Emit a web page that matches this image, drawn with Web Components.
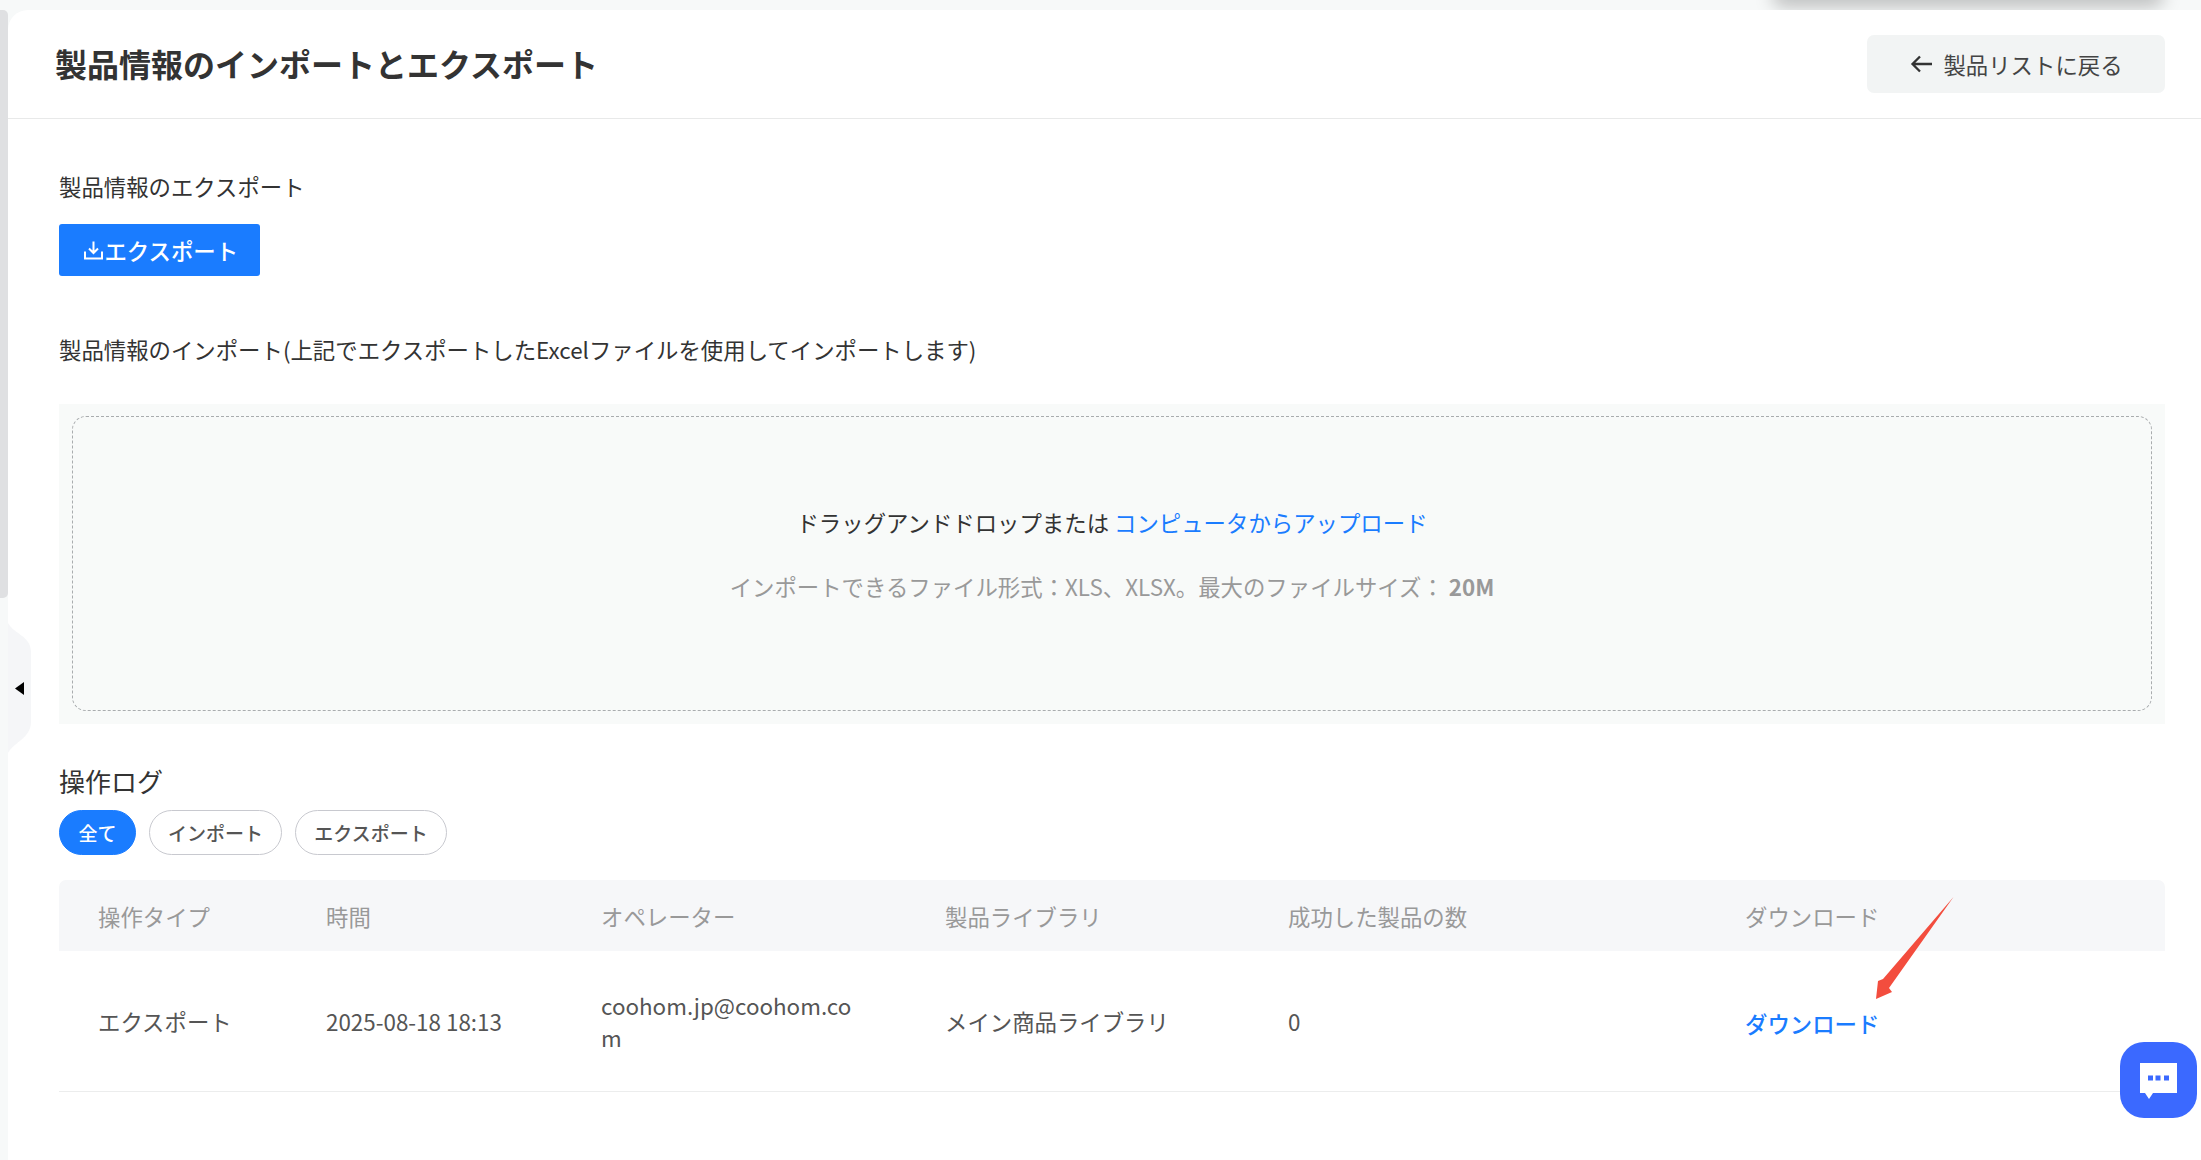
<!DOCTYPE html>
<html lang="ja"><head><meta charset="utf-8"><title>製品情報のインポートとエクスポート</title>
<style>
html,body{margin:0;padding:0;height:1160px;overflow:hidden;background:#f7f9f9;font-family:"Noto Sans CJK JP","Noto Sans",sans-serif;color:#333}
</style></head><body>
<app-shell>
  <page-header title-text="製品情報のインポートとエクスポート" back-text="製品リストに戻る"></page-header>
  <page-content>
    <section-label>製品情報のエクスポート</section-label>
    <export-button>エクスポート</export-button>
    <section-label style="margin-top:57px">製品情報のインポート(上記でエクスポートしたExcelファイルを使用してインポートします)</section-label>
    <drop-zone></drop-zone>
    <log-panel></log-panel>
  </page-content>
</app-shell>
<top-shadow></top-shadow>
<red-arrow></red-arrow>
<chat-fab></chat-fab>
<script>
function def(name, html){
  customElements.define(name, class extends HTMLElement{
    connectedCallback(){
      if(this.shadowRoot) return;
      const r=this.attachShadow({mode:"open"});
      r.innerHTML=typeof html==="function"?html(this):html;
    }
  });
}
def("app-shell",`<style>
:host{display:flex;height:1160px;padding-top:10px;box-sizing:border-box;position:relative;z-index:1}
.rail{width:8px;flex:none}
.thumb{height:588px;background:#dfe0e2;border-radius:0 5px 5px 0}
.card{flex:1;min-width:0;background:#fff;border-top-left-radius:20px;position:relative}
.tab{position:absolute;left:8px;top:622px;width:23px;height:132px}
.tab svg{display:block}
</style>
<div class="rail"><div class="thumb"></div></div>
<div class="card"><slot></slot></div>
<div class="tab"><svg width="23" height="132" viewBox="0 0 23 132"><path d="M0 1C6 12 23 14 23 30V100C23 116 6 120 0 131Z" fill="#f5f6f8"/><path d="M7 66.500L16 60V73Z" fill="#000"/></svg></div>`);
def("page-header",h=>`<style>
:host{display:flex;align-items:center;justify-content:space-between;height:108px;border-bottom:1px solid #e8e9e9;padding:0 36px 0 47px;}
h1{margin:0;font-size:32px;font-weight:700;line-height:44px;color:#333;position:relative;top:-1px}
button{all:unset;box-sizing:border-box;display:flex;align-items:center;justify-content:center;gap:10px;width:298px;height:58px;background:#f2f4f4;border-radius:7px;font-size:22.4px;color:#444;font-family:inherit}
svg{display:block}
</style><h1>${h.getAttribute("title-text")}</h1>
<button><svg width="24" height="20" viewBox="0 0 24 20" fill="none" stroke="#333" stroke-width="2.3"><path d="M23 10H3.500M11 2.500L3.500 10L11 17.500"/></svg><span>${h.getAttribute("back-text")}</span></button>`);
def("page-content",`<style>:host{display:block;padding:51px 36px 0 51px}</style><slot></slot>`);
def("section-label",`<style>:host{display:block;font-size:22.4px;line-height:32px;color:#333}</style><slot></slot>`);
def("export-button",`<style>
:host{display:flex;align-items:center;justify-content:center;width:201px;height:52px;margin-top:22px;background:#1a7cff;border-radius:3px;color:#fff;font-size:22.4px;font-weight:500}
svg{display:block;margin:0 1px 0 3.500px}
</style><svg width="19" height="19" viewBox="0 0 19 19" fill="none" stroke="#fff" stroke-width="2"><path d="M9.500 0.500V11.500M5 7.500L9.500 12L14 7.500M1 10.500V17.500H18V10.500"/></svg><slot></slot>`);
def("drop-zone",`<style>
:host{display:block;margin-top:39px;height:320px;box-sizing:border-box;background:#f8faf9;padding:12px 13px 13px}
.in{height:295px;box-sizing:border-box;border:1px dashed #a9acae;border-radius:14px;padding-top:89px;text-align:center;font-size:22.4px;line-height:32px}
.a{color:#333}.a span{color:#1a7cff}
.b{color:#999;margin-top:32px}.b b{font-weight:700}
</style><div class="in"><div class="a">ドラッグアンドドロップまたは <span>コンピュータからアップロード</span></div><div class="b">インポートできるファイル形式：XLS、XLSX。最大のファイルサイズ： <b>20M</b></div></div>`);
def("filter-tag",`<style>
:host{display:flex;align-items:center;justify-content:center;box-sizing:border-box;height:45px;border-radius:23px;font-size:19px;white-space:nowrap;border:1px solid #c8c9cf;color:#555;font-weight:500}
:host([active]){background:#1a7cff;border-color:#1a7cff;color:#fff}
</style><slot></slot>`);
def("log-panel",`<style>
:host{display:block}
h2{margin:39px 0 0;font-size:26px;font-weight:400;line-height:36px;color:#333}
.tags{display:flex;gap:13px;margin-top:11px}
table{width:2106px;table-layout:fixed;border-collapse:separate;border-spacing:0;margin-top:25px;font-size:22.4px;line-height:32px}
th{background:#f6f7f9;height:71px;padding:0 39px;text-align:left;font-weight:400;color:#999;box-sizing:border-box}
th:first-child{border-top-left-radius:7px}th:last-child{border-top-right-radius:7px}
td{height:141px;box-sizing:border-box;padding:0 39px;color:#555;border-bottom:1px solid #eceded;word-break:break-all}
td a{color:#1a7cff;font-weight:500;position:relative;top:2px}
</style>
<h2>操作ログ</h2>
<div class="tags"><filter-tag active style="width:77px">全て</filter-tag><filter-tag style="width:133px">インポート</filter-tag><filter-tag style="width:152px">エクスポート</filter-tag></div>
<table><colgroup><col style="width:228px"><col style="width:275px"><col style="width:344px"><col style="width:343px"><col style="width:457px"><col></colgroup>
<thead><tr><th>操作タイプ</th><th>時間</th><th>オペレーター</th><th>製品ライブラリ</th><th>成功した製品の数</th><th>ダウンロード</th></tr></thead>
<tbody><tr><td>エクスポート</td><td>2025-08-18 18:13</td><td>coohom.jp@coohom.com</td><td>メイン商品ライブラリ</td><td>0</td><td><a>ダウンロード</a></td></tr></tbody></table>`);
def("top-shadow",`<style>:host{position:absolute;z-index:0;left:1772px;top:-20px;width:392px;height:20px;border-radius:10px;box-shadow:0 6px 18px rgba(0,0,0,.26)}</style>`);
def("red-arrow",`<style>:host{position:absolute;z-index:2;left:1870px;top:892px;width:90px;height:112px}svg{display:block}</style>
<svg width="90" height="112" viewBox="0 0 90 112"><path d="M83.500 5L19 96L22 100L6 107L8 89L13 87Z" fill="#f34d3e"/></svg>`);
def("chat-fab",`<style>:host{position:absolute;z-index:2;left:2120px;top:1042px;width:77px;height:76px;background:#3b69ff;border-radius:24px}svg{display:block}</style>
<svg width="77" height="76" viewBox="0 0 77 76"><path d="M20 21H57V51H33L29 57L25 51H20Z" fill="#fff"/><g fill="#3b69ff"><rect x="28" y="33.500" width="5" height="5"/><rect x="35.500" y="33.500" width="5" height="5"/><rect x="44" y="33.500" width="5" height="5"/></g></svg>`);
</script>
</body></html>
